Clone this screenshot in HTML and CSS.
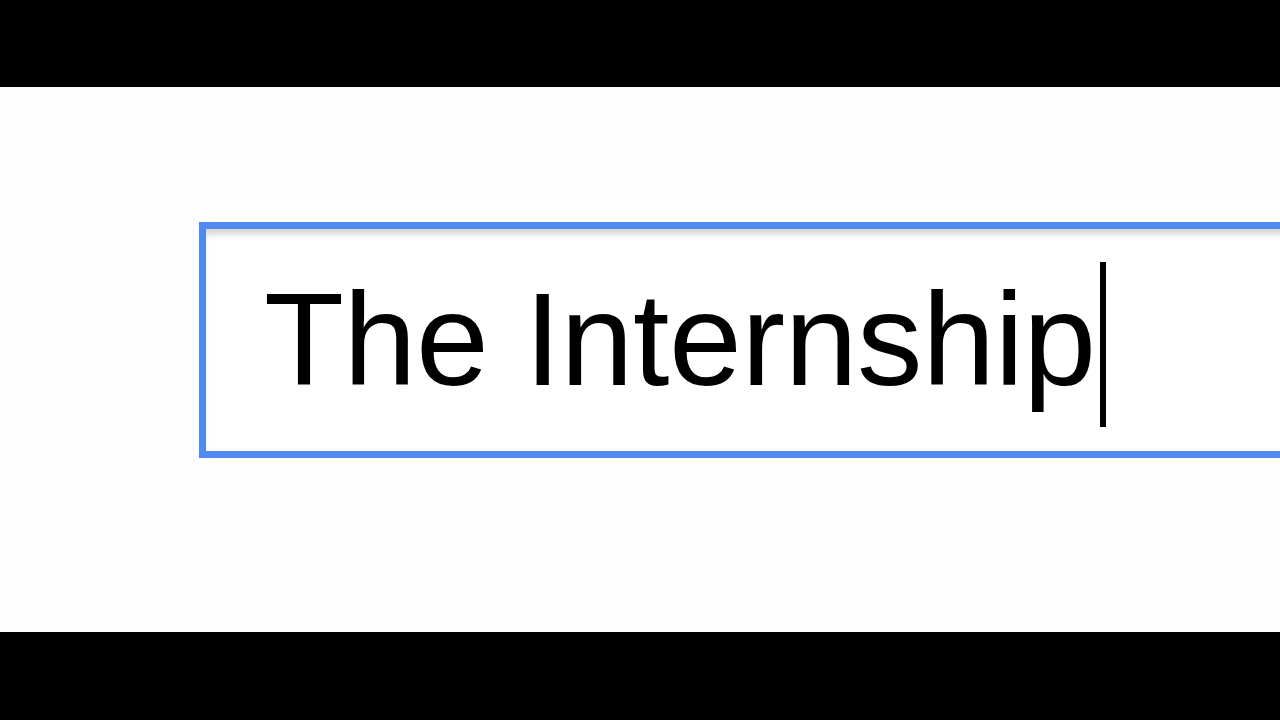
FILE: index.html
```html
<!DOCTYPE html>
<html lang="en">
<head>
<meta charset="utf-8">
<title>The Internship</title>
<link rel="stylesheet" href="styles.css">
</head>
<body>
<div class="bar"></div>
<main class="screen">
  <div class="search">
    <span class="query">The Internship</span><span class="caret"></span>
  </div>
</main>
<div class="bar bar-bottom"></div>
</body>
</html>
```
FILE: styles.css
```css
html, body {
  margin: 0;
  padding: 0;
  background: #000;
  width: 1280px;
  height: 720px;
  overflow: hidden;
}
.bar {
  height: 87px;
  background: #000;
}
.bar-bottom {
  height: 88px;
}
.screen {
  height: 545px;
  background: #fdfdfd;
  overflow: hidden;
  padding-top: 135px;
  padding-left: 199px;
  box-sizing: border-box;
}
.search {
  width: 1200px;
  height: 236px;
  box-sizing: border-box;
  border: 7px solid #5089ef;
  background: #fff;
  box-shadow: inset 0 8px 7px -3px rgba(0, 0, 0, 0.18);
  padding: 33px 0 24px 58px;
  font-family: "Liberation Sans", Arial, sans-serif;
  font-size: 131px;
  line-height: 1;
  color: #000;
  white-space: nowrap;
}
.query {
  letter-spacing: -0.4px;
}
.caret {
  display: inline-block;
  width: 6px;
  height: 165px;
  background: #000;
  vertical-align: -42px;
  margin-left: 4px;
}
```
